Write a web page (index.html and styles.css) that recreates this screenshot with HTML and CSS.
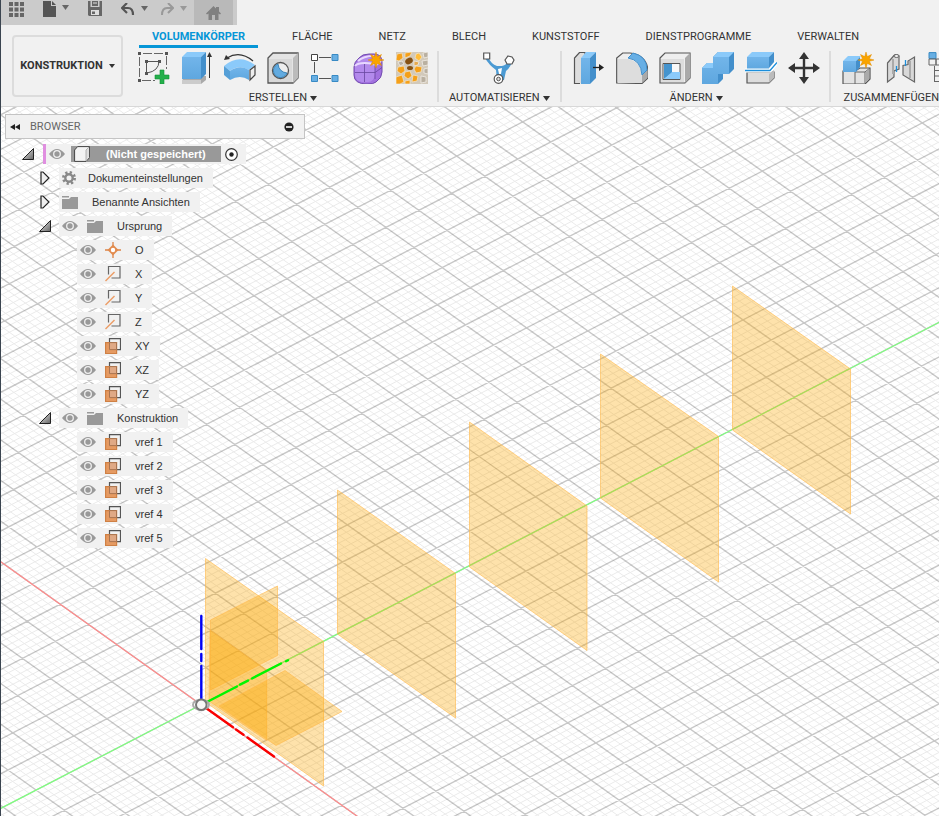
FILE: index.html
```html
<!DOCTYPE html>
<html lang="de">
<head>
<meta charset="utf-8">
<title>Konstruktion</title>
<link rel="stylesheet" href="styles.css">
</head>
<body>
<svg class="defs" aria-hidden="true">
  <defs>
    <linearGradient id="shade" x1="0" y1="0" x2="1" y2="1"><stop offset="0" stop-color="#eee"/><stop offset="1" stop-color="#666"/></linearGradient>
    <linearGradient id="blueFace" x1="0" y1="0" x2="0" y2="1"><stop offset="0" stop-color="#72b5ea"/><stop offset="1" stop-color="#5ea7df"/></linearGradient>
    <symbol id="caret" viewBox="0 0 8 5" preserveAspectRatio="none"><path d="M0 0h8L4 5z" fill="currentColor"/></symbol>
    <symbol id="eye" viewBox="0 0 16 12"><path d="M0 6Q4 1 8 1t8 5q-4 5-8 5T0 6z" fill="#999"/><circle cx="8" cy="6" r="3.3" fill="none" stroke="#f1f1f1" stroke-width="1.3"/></symbol>
    <symbol id="folder" viewBox="0 0 16 14"><path d="M0 1h7v1.500H0zM9 2h7v12H0V4h7z" fill="#999"/></symbol>
    <symbol id="open" viewBox="0 0 12 12"><path d="M.5 11.500h11V.5z" fill="url(#shade)" stroke="#222"/></symbol>
    <symbol id="closed" viewBox="0 0 10 14"><path d="M1 1h2l6 6-6 6H1z" fill="#eee" stroke="#222" stroke-width="1.200"/></symbol>
    <symbol id="axis" viewBox="0 0 16 16"><path d="M3.500 8.500v-8h11.500v11.500H6.500" fill="none" stroke="#666" stroke-width="1.200"/><path d="M.5 15 9.500 6" stroke="#eb9c66" stroke-width="1.400"/></symbol>
    <symbol id="plane" viewBox="0 0 16 16"><path d="M4.500 4V.6h11v11H12" fill="none" stroke="#555" stroke-width="1.200"/><path d="M.6 4.600h11v11H.6z" fill="#e59a62" stroke="#cf8044" stroke-width="1.200"/><path d="M4.500 4.600h7v7h-7z" fill="#e0a985" stroke="#a97450"/></symbol>
    <symbol id="point" viewBox="0 0 16 16"><path d="M8 0v16M0 8h16" stroke="#dc8447" stroke-width="1.300"/><path d="m8 2.500 5.500 5.500-5.500 5.500L2.500 8z" fill="#e28b4e"/><circle cx="8" cy="8" r="2.200" fill="#fff"/></symbol>
    <symbol id="star" viewBox="0 0 16 16"><path d="m8 0 1.300 4.600L13.500 2.500 11.400 6.700 16 8l-4.600 1.300 2.100 4.200-4.200-2.100L8 16l-1.300-4.600-4.200 2.100 2.100-4.200L0 8l4.600-1.300L2.500 2.500l4.200 2.100z" fill="#f9a400" stroke="#e28c00" stroke-width=".5"/></symbol>
  </defs>
</svg>
<div class="app">
  <header>
    <nav class="quick" aria-label="Schnellzugriff">
      <button class="q-grid" aria-label="Datengruppe"><svg width="15" height="15" viewBox="0 0 15 15"><path d="M0 0h4v4H0zM5.500 0h4v4h-4zM11 0h4v4h-4zM0 5.500h4v4H0zM5.500 5.500h4v4h-4zM11 5.500h4v4h-4zM0 11h4v4H0zM5.500 11h4v4h-4zM11 11h4v4h-4z" fill="#666"/></svg></button>
      <button class="q-file" aria-label="Datei"><svg width="13" height="16" viewBox="0 0 13 16"><path d="M0 0h8v5h5v11H0zM9 0l4 4H9z" fill="#555"/></svg><svg class="q-caret" width="7" height="5"><use href="#caret"/></svg></button>
      <button class="q-save" aria-label="Speichern"><svg width="14" height="15" viewBox="0 0 14 15"><path d="M0 0h2.500v6h9V0H14v15H1l-1-1z" fill="#666"/><path d="M4 0h6v5H4z" fill="#666"/><path d="M5 1.500h4v1H5zM3 9h8v5H3z" fill="#ddd"/><path d="M4 10.500h3V13H4z" fill="#666"/></svg></button>
      <button class="q-undo" aria-label="Rückgängig"><svg width="14" height="13" viewBox="0 0 14 13"><path d="M6 0 1 5l5 5M2 5h5q5 0 5 7" fill="none" stroke="#555" stroke-width="2.200"/></svg><svg class="q-caret" width="7" height="5"><use href="#caret"/></svg></button>
      <button class="q-redo" aria-label="Wiederholen"><svg width="14" height="13" viewBox="0 0 14 13"><path d="m8 0 5 5-5 5M12 5H7q-5 0-5 7" fill="none" stroke="#999" stroke-width="2"/></svg><svg class="q-caret" width="7" height="5"><use href="#caret"/></svg></button>
      <button class="q-home" aria-label="Startseite"><svg width="15" height="14" viewBox="0 0 15 14"><path d="M7.500 0 10 2.500V1h3v4.500l2 2-1 1-1.500-1V14H9V9H6v5H2.500V7.500L1 8.500l-1-1z" fill="#808080"/></svg></button>
    </nav>
    <div class="ribbon">
      <button class="workspace">KONSTRUKTION <svg width="6" height="4"><use href="#caret"/></svg></button>
      <div class="ribbon-main">
        <nav class="tabs">
          <a href="#" class="active">VOLUMENKÖRPER</a><a href="#">FLÄCHE</a><a href="#">NETZ</a><a href="#">BLECH</a><a href="#">KUNSTSTOFF</a><a href="#">DIENSTPROGRAMME</a><a href="#">VERWALTEN</a>
        </nav>
        <div class="groups">
          <section class="group">
            <div class="tools">
              <button aria-label="Skizze erstellen"><svg viewBox="0 0 32 32"><path d="M1.500 5v21M5 1.500h21M28.500 4v13M4 28.500h13" fill="none" stroke="#666" stroke-dasharray="9 2"/><path d="M8.500 9v12M8 9.500h12M21 9q0 10-12 12" fill="none" stroke="#555"/><path d="M0 0h3v3H0zM27 0h3v3h-3zM0 27h3v3H0zM7 8h3v3H7zM20 8h3v3h-3zM7 20h3v3H7z" fill="#555"/><path d="M22 18h4v5h5v4h-5v5h-4v-5h-5v-4h5z" fill="#24b04b" stroke="#129137" stroke-width=".6"/></svg></button>
              <button aria-label="Extrusion"><svg viewBox="0 0 32 32"><path d="m1 28 5-4h19v4l-5 4H1z" fill="#aaa"/><path d="M1 28h19v4H1z" fill="#ccc"/><path d="M1 5h19v22H1z" fill="url(#blueFace)"/><path d="m1 5 5-5h19l-5 5z" fill="#8bcafa"/><path d="m20 5 5-5v22l-5 5z" fill="#438fcb"/><path d="M28.500 3v23" stroke="#333"/><path d="m28.500 0 2.500 5h-5z" fill="#333"/></svg></button>
              <button aria-label="Drehung"><svg viewBox="0 0 32 32"><path d="M3 6q13-8 26 3" fill="none" stroke="#333" stroke-width="1.200"/><path d="m0 8 2-5 4 4z" fill="#333"/><path d="M0 14Q15 1 31 13l-6 5Q15 12 6 19z" fill="#8bcafa"/><path d="m0 14 6 5v9l-6-5z" fill="#559fd7"/><path d="M6 19q10-7 19-1v10q-9-6-19 0z" fill="url(#blueFace)"/><path d="m26 18 5-4v9l-5 5z" fill="#eee" stroke="#444" stroke-width="1.200"/></svg></button>
              <button aria-label="Bohrung"><svg viewBox="0 0 32 32"><path d="m1 6 5-5h25v25l-5 5H1z" fill="#e4e4e4" stroke="#555" stroke-width="1.300"/><path d="M26 6 31 1v25l-5 5z" fill="#bbb"/><path d="M2 7h23v23H2z" fill="#d8d8d8"/><circle cx="13.500" cy="18.500" r="8" fill="#eee" stroke="#555" stroke-width="1.300"/><path d="M11 12q1 8 9 9a7 7 0 1 1-9-9z" fill="#62abe0" stroke="#2874aa" stroke-width=".8"/></svg></button>
              <button aria-label="Muster"><svg viewBox="0 0 32 32"><path d="M9 5.500h12M4.500 10v11M9 26.500h12" stroke="#555"/><path d="M1.500 2.500h6v6h-6z" fill="#fff" stroke="#444"/><path d="M22 2.500h6v6h-6zM1.500 23.500h6v6h-6zM22 23.500h6v6h-6z" fill="#68afe3" stroke="#388ac4"/></svg></button>
              <button aria-label="Form erstellen"><svg viewBox="0 0 32 32"><path d="M1 15q0-5 5-9 3-4 10-4h5q8 0 8 8v10q0 6-6 10-2 2-9 2-13 0-13-9z" fill="#a271df" stroke="#714bae"/><path d="M2 15q1-8 9-9h5q5 0 6 7v9q-1 8-7 8H9q-7-1-7-8z" fill="#b38aec"/><path d="M2 14q2-3 10-3t10 2M5 9q5-5 16-5M22 14l6-5" fill="none" stroke="#e8d8ff" stroke-width="2"/><path d="M11.500 12v18M2 20.500h20l7-5M22 11v16" fill="none" stroke="#6848a0" stroke-width=".8"/><use href="#star" x="15" y="0" width="16" height="16"/></svg></button>
              <button aria-label="Volumengitter"><svg viewBox="0 0 32 32"><path d="M0 0h32v32H0z" fill="#d2c9ba"/><g fill="#f5a019" stroke="#f2e6cf" stroke-width=".7"><path d="m1 2 5-1 1 5-4 3-3-1zM9 1l7-1-2 4-5 2zM2 15l6-1 1 5-4 3-4-3zM20 14l6 1-1 5-5 1-2-4zM0 25l6-2 2 7-4 2H0zM9 20l5-1 2 5-4 3-4-3zM17 23l5 1-1 5-5 1zM9 29l5-1v4H9z"/><path d="m20 2 3-1 3 4-3 4-4-3z" fill="#ffbd3b"/></g><g fill="#865113"><ellipse cx="13" cy="9" rx="4" ry="3" transform="rotate(-30 13 9)"/><ellipse cx="14" cy="16" rx="3" ry="2"/></g><g fill="#b9b0a1" stroke="#f1eee7" stroke-width=".8"><path d="m27 1 5-1v5l-4 1zM26 9l6-1v5l-5 1zM28 17l4-1v6l-4-1zM25 24l5 1v5l-5 1zM2 10l4-1 2 3-4 2z"/><path d="m18 9 5 1-1 3-4 1z" fill="#e6aa50"/></g></svg></button>
            </div>
            <button class="label">ERSTELLEN <svg width="7" height="5"><use href="#caret"/></svg></button>
          </section>
          <section class="group auto">
            <div class="tools">
              <button aria-label="Automatisieren"><svg viewBox="0 0 32 32"><path d="M5 5q3 7 9 9h5q5-1 7-6l3 2q-2 6-6 9l-2 9h-7l-1-10Q6 13 2 6z" fill="#4b9ad3"/><path d="m15 17 4-1-1 6h-2z" fill="#fff"/><path d="M.7 1h6v6h-6zM25 4l4 1 2 3-2 4h-5l-2-4z" fill="#fff" stroke="#555" stroke-width="1.200"/><circle cx="15.500" cy="27" r="4.300" fill="#fff" stroke="#555" stroke-width="1.200"/><circle cx="15.500" cy="27" r="1.800" fill="#ddd" stroke="#555"/></svg></button>
            </div>
            <button class="label">AUTOMATISIEREN <svg width="7" height="5"><use href="#caret"/></svg></button>
          </section>
          <section class="group">
            <div class="tools">
              <button aria-label="Drücken/Ziehen"><svg viewBox="0 0 32 32"><path d="M7 31.500H1.500V6l5-5.500H12v31" fill="#ddd" stroke="#555" stroke-width="1.200"/><path d="M8 6h9v26H8z" fill="url(#blueFace)"/><path d="m8 6 5-6h10l-6 6z" fill="#8bcafa"/><path d="m17 6 6-6v26l-6 6z" fill="#438fcb"/><path d="M20 15.500h8" stroke="#222" stroke-width="1.300"/><path d="m26 12 5 3.500-5 3.500z" fill="#222"/></svg></button>
              <button aria-label="Abrundung"><svg viewBox="0 0 32 32"><path d="M.7 31V6l6-5H14q17 2 18 18v7l-6 5.500z" fill="#eee" stroke="#555" stroke-width="1.200"/><path d="M2 7h10q13 2 14 18v6H2z" fill="#ddd"/><path d="m26 23 5-5v8l-5 5z" fill="#aaa"/><path d="m12 6 5-5q14 3 14 17l-5 5Q25 8 12 6z" fill="#67afe5" stroke="#438fcb"/></svg></button>
              <button aria-label="Schale"><svg viewBox="0 0 32 32"><path d="m1 6 5-5h25v25l-5 5H1z" fill="#eee" stroke="#555" stroke-width="1.200"/><path d="m26 6 5-5v25l-5 5z" fill="#aaa"/><path d="M2 7h23v23H2z" fill="#ddd"/><path d="M4 11.500h17v16H4z" fill="#f8f8f8" stroke="#555"/><path d="M5 12h8v9l-8 6z" fill="#4594ce"/><path d="m5 27 8-7h8v7z" fill="#8bcafa"/></svg></button>
              <button aria-label="Kombinieren"><svg viewBox="0 0 32 32"><path d="m0 16 5-5h6V5l5-5h16v17l-5 5h-6v5l-5 5H0z" fill="#438fcb"/><path d="M0 16h11V5h16v17H16v10H0z" fill="url(#blueFace)"/><path d="m0 16 5-5h6v5zM11 5l5-5h16l-5 5z" fill="#8bcafa"/></svg></button>
              <button aria-label="Körper teilen"><svg viewBox="0 0 32 32"><path d="M2 20h27v6l-5 5H2z" fill="#ddd" stroke="#555" stroke-width="1.200"/><path d="m24 22 5-4v8l-5 5z" fill="#bbb"/><path d="M2 5h22v12H2z" fill="url(#blueFace)"/><path d="m2 5 5-5h22l-5 5z" fill="#8bcafa"/><path d="m24 5 5-5v10l-5 6z" fill="#438fcb"/><path d="M0 18.500h25l7-8" fill="none" stroke="#fff" stroke-width="4"/><path d="M0 18.500h25l7-8" fill="none" stroke="#1b8edb" stroke-width="1.300"/></svg></button>
              <button aria-label="Verschieben"><svg viewBox="0 0 32 32"><path d="M16 5v22M5 16h22" stroke="#333" stroke-width="2.400"/><path d="m16 0 5 7H11zM16 32l-5-7h10zM0 16l7-5v10zM32 16l-7 5V11z" fill="#333"/></svg></button>
            </div>
            <button class="label">ÄNDERN <svg width="7" height="5"><use href="#caret"/></svg></button>
          </section>
          <section class="group last">
            <div class="tools">
              <button aria-label="Neue Komponente"><svg viewBox="0 0 32 32"><path d="M1 19h12l5-3h10v11l-5 5H1z" fill="#e3e3e3" stroke="#555" stroke-width="1.200"/><path d="M13 20v12M13 20h10l5-4M23 20v11" fill="none" stroke="#666"/><path d="m23 21 4-4v10l-4 4z" fill="#aaa"/><path d="M1 9h13v11H1z" fill="url(#blueFace)"/><path d="m1 9 5-5h13l-5 5z" fill="#8bcafa"/><path d="m14 9 4-4v10l-4 5z" fill="#438fcb"/><use href="#star" x="16" y="0" width="16" height="16"/></svg></button>
              <button aria-label="Verbindung"><svg viewBox="0 0 32 32"><path d="M2.500 11 9 3.500q2-2 5 .5v13l-5 2v6l-6.500 5z" fill="#d8d8d8" stroke="#666" stroke-width="1.200"/><path d="M29.500 5v25L18 23V13.500l5-1V9z" fill="#d8d8d8" stroke="#666" stroke-width="1.200"/><path d="M8 7v15M25 9v17" stroke="#aaa" stroke-width="2"/><path d="M11.500 14v6M20.500 8v6" stroke="#1b8edb" stroke-width="1.300"/><ellipse cx="11.500" cy="4" rx="2.500" ry="1.500" fill="#eee" stroke="#666"/></svg></button>
              <button aria-label="Stückliste"><svg viewBox="0 0 32 32"><path d="M1 .6h7v6H1z" fill="#68afe3" stroke="#388ac4"/><path d="M1 7h7v6H1zM8 7h7v6H8zM6.500 14v16M6.500 18.500h8M6.500 24h8M6.500 29.500h8" fill="none" stroke="#666"/></svg></button>
            </div>
            <button class="label">ZUSAMMENFÜGEN <svg width="7" height="5"><use href="#caret"/></svg></button>
          </section>
        </div>
      </div>
    </div>
  </header>
  <main>
    <svg class="scene" role="img" aria-label="Ansichtsfenster">
      <g transform="translate(-1 -107)">
        <g transform="matrix(32.97 -17.08 28.15 20.1 201 704.7)">
          <path id="minor"/>
          <path id="major"/>
        </g>
        <path class="axis-line green" d="M0 808.8 201 704.700 1300 135.400"/>
        <path class="axis-line red" d="M0 561.200 201 704.700 600 989.600"/>
        <g class="planes">
          <path d="M732.500 286 850.500 369V514L732.500 430z"/>
          <path d="M600.500 354 718.500 436.500V582L600.500 498z"/>
          <path d="M469.500 422 587 506V650.500L469.500 567z"/>
          <path d="M337.500 490 455.500 573.500V718L337.500 634z"/>
          <path d="M205.500 558.500 323.500 641.500V786L205.500 702z"/>
          <path d="M210.500 620 277.500 586V655.500L210.500 690z"/>
          <path d="M210 630 266.700 670V740.500L209 701z"/>
          <path d="M285 670.500 342 711.500 276 745.500 219 706z"/>
        </g>
        <g class="axes">
          <path stroke="#0000f5" d="M201.300 616v33M201.300 654v7M201.300 666v34"/>
          <path stroke="#00f500" d="m206 702.500 31-16M240 684.600l8-4M252 678.500l29-15M286 661.200l2-1"/>
          <path stroke="#fa0000" d="m206 708 27 19.300M236 729.500l7.500 5.300M247.500 737.600l26.500 19"/>
        </g>
        <ellipse cx="201" cy="704.700" rx="8" ry="5" fill="none" stroke="#aaa" stroke-width="2"/>
        <circle cx="201.300" cy="704.700" r="5.300" fill="#f6f6f6" stroke="#777" stroke-width="2"/>
      </g>
    </svg>
    <aside class="browser">
      <div class="browser-head">
        <button aria-label="Einklappen"><svg width="10" height="6" viewBox="0 0 10 6"><path d="M5 0v6L0 3zM10 0v6L5 3z" fill="#222"/></svg></button>
        <h2>BROWSER</h2>
        <button aria-label="Ausblenden"><svg width="10" height="10" viewBox="0 0 10 10"><circle cx="5" cy="5" r="4.600" fill="#222"/><path d="M2 5h6" stroke="#fff" stroke-width="1.600"/></svg></button>
      </div>
      <ul class="tree">
        <li class="root"><svg class="exp" width="12" height="12"><use href="#open"/></svg><div class="item"><svg class="eye"><use href="#eye"/></svg><span class="selected"><svg width="16" height="16" viewBox="0 0 16 16"><path d="m.6 4 3-3.400h12v11l-3.600 3.800H.6z" fill="#f3f3f3" stroke="#444"/><path d="m12 4 3-3v10l-3 4z" fill="#ddd"/><path d="m12 4 3-3M12 4v11" stroke="#999" stroke-width=".7"/></svg>(Nicht gespeichert)</span><svg class="radio" width="13" height="13" viewBox="0 0 13 13"><circle cx="6.500" cy="6.500" r="5.800" fill="#fff" stroke="#333" stroke-width="1.200"/><circle cx="6.500" cy="6.500" r="2.200" fill="#222"/></svg></div></li>
        <li class="l2"><svg class="exp" width="10" height="14"><use href="#closed"/></svg><div class="item plain"><svg width="14" height="14" viewBox="0 0 14 14"><circle cx="7" cy="7" r="5.500" fill="none" stroke="#888" stroke-width="3" stroke-dasharray="2.160 2.160"/><circle cx="7" cy="7" r="3.700" fill="none" stroke="#888" stroke-width="2.400"/></svg>Dokumenteinstellungen</div></li>
        <li class="l2"><svg class="exp" width="10" height="14"><use href="#closed"/></svg><div class="item plain"><svg class="folder"><use href="#folder"/></svg>Benannte Ansichten</div></li>
        <li class="l2"><svg class="exp" width="12" height="12"><use href="#open"/></svg><div class="item"><svg class="eye"><use href="#eye"/></svg><svg class="folder"><use href="#folder"/></svg>Ursprung</div></li>
        <li class="l3"><div class="item"><svg class="eye"><use href="#eye"/></svg><svg class="kind"><use href="#point"/></svg>O</div></li>
        <li class="l3"><div class="item"><svg class="eye"><use href="#eye"/></svg><svg class="kind"><use href="#axis"/></svg>X</div></li>
        <li class="l3"><div class="item"><svg class="eye"><use href="#eye"/></svg><svg class="kind"><use href="#axis"/></svg>Y</div></li>
        <li class="l3"><div class="item"><svg class="eye"><use href="#eye"/></svg><svg class="kind"><use href="#axis"/></svg>Z</div></li>
        <li class="l3"><div class="item"><svg class="eye"><use href="#eye"/></svg><svg class="kind"><use href="#plane"/></svg>XY</div></li>
        <li class="l3"><div class="item"><svg class="eye"><use href="#eye"/></svg><svg class="kind"><use href="#plane"/></svg>XZ</div></li>
        <li class="l3"><div class="item"><svg class="eye"><use href="#eye"/></svg><svg class="kind"><use href="#plane"/></svg>YZ</div></li>
        <li class="l2"><svg class="exp" width="12" height="12"><use href="#open"/></svg><div class="item"><svg class="eye"><use href="#eye"/></svg><svg class="folder"><use href="#folder"/></svg>Konstruktion</div></li>
        <li class="l3"><div class="item"><svg class="eye"><use href="#eye"/></svg><svg class="kind"><use href="#plane"/></svg>vref 1</div></li>
        <li class="l3"><div class="item"><svg class="eye"><use href="#eye"/></svg><svg class="kind"><use href="#plane"/></svg>vref 2</div></li>
        <li class="l3"><div class="item"><svg class="eye"><use href="#eye"/></svg><svg class="kind"><use href="#plane"/></svg>vref 3</div></li>
        <li class="l3"><div class="item"><svg class="eye"><use href="#eye"/></svg><svg class="kind"><use href="#plane"/></svg>vref 4</div></li>
        <li class="l3"><div class="item"><svg class="eye"><use href="#eye"/></svg><svg class="kind"><use href="#plane"/></svg>vref 5</div></li>
      </ul>
    </aside>
  </main>
</div>
<script src="grid.js"></script>
</body>
</html>
```
FILE: styles.css
```css
* { box-sizing: border-box; }
body { margin: 0; background: #f1f1f1; color: #333; font: 11px/14px Roboto, "Liberation Sans", sans-serif; }
button { margin: 0; padding: 0; border: 0; background: none; color: inherit; font: inherit; }
svg { display: block; flex: none; }
.defs { position: absolute; width: 0; height: 0; }
.app { display: flex; flex-direction: column; height: 100vh; overflow: hidden; border-left: 1px solid #3b4550; }

.quick { display: flex; align-items: flex-start; width: max-content; height: 25px; padding-right: 4px; background: #cbcbcb; color: #666; }
.quick button { display: flex; align-items: flex-start; gap: 6px; padding-top: 2px; }
.q-caret { margin-top: 4px; }
.quick .q-grid { margin-left: 8px; }
.quick .q-file { margin-left: 19px; padding-top: 1px; }
.quick .q-save { margin-left: 19px; padding-top: 1px; }
.quick .q-undo { margin-left: 19px; padding-top: 3px; }
.quick .q-redo { margin-left: 12px; padding-top: 3px; color: #999; }
.q-undo .q-caret, .q-redo .q-caret { margin-top: 3px; }
.quick .q-home { margin-left: 7px; width: 39px; height: 25px; padding-top: 6px; justify-content: center; background: #b9b9b9; }

.ribbon { display: flex; height: 82px; border-bottom: 1px solid #d8d8d8; }
.workspace { display: flex; flex: none; align-items: center; justify-content: center; gap: 6px; width: 111px; height: 62px; margin: 10px 15px 0 11px; border: 2px solid #dcdcdc; border-radius: 4px; font-weight: 700; }
.ribbon-main { flex: 1; min-width: 0; overflow: hidden; }
.tabs { display: flex; gap: 22px; height: 23px; margin-left: 1px; }
.tabs a { flex: none; height: 23px; padding: 5px 12px 0; color: inherit; text-decoration: none; }
.tabs a.active { padding: 5px 13px 0; color: #0696d7; font-weight: 700; border-bottom: 3px solid #0696d7; }
.groups { display: flex; margin-top: 3px; }
.group { display: flex; flex: none; flex-direction: column; align-items: center; height: 51px; padding: 1px 9px 0 11px; border-right: 2px solid #dcdcdc; }
.group:first-child { padding-left: 0; }
.group.last { align-items: flex-start; border: 0; }
.group.auto { padding: 1px 10px 0; }
.tools { display: flex; gap: 11px; }
.tools svg { width: 32px; height: 32px; }
.label { display: flex; align-items: center; gap: 3px; margin-top: 7px; white-space: nowrap; }
.last .label { margin-left: 2px; }

main { position: relative; flex: 1; min-height: 0; overflow: hidden; background: #fff; }
.scene { position: absolute; inset: 0; width: 100%; height: 100%; }
#minor, #major { fill: none; vector-effect: non-scaling-stroke; }
#minor { stroke: #ebebeb; stroke-width: 1px; }
#major { stroke: #000; stroke-opacity: .22; stroke-width: 1.4px; }
.axis-line { fill: none; stroke-width: 1.2; }
.green { stroke: #7dff7d; }
.red { stroke: #ff8a8a; }
.planes { fill: #fca800; fill-opacity: .33; stroke: #ffb848; stroke-opacity: .6; }
.axes { fill: none; stroke-width: 2.4; stroke-linecap: round; }

.browser { position: relative; width: 300px; margin: 7px 0 0 4px; }
.browser-head { display: flex; align-items: center; height: 25px; padding: 0 10px 0 4px; border: 1px solid #c4c4c4; background: #f1f1f1; color: #666; }
.browser-head h2 { flex: 1; margin: 0 0 0 10px; font: inherit; }
.tree { margin: 0; padding: 3px 0 0; list-style: none; font-family: "Liberation Sans", Arial, sans-serif; }
.tree li { display: flex; align-items: center; height: 24px; }
.exp { margin-right: 8px; }
.root { padding-left: 17px; }
.l2 { padding-left: 34px; }
.l2 .exp[width="10"] { margin: 0 9px 0 1px; }
.l3 { padding-left: 72px; }
.item { display: flex; align-items: center; height: 20px; padding: 0 10px 0 3px; background: #f1f1f1; white-space: nowrap; }
.eye { width: 16px; height: 12px; margin-right: 9px; }
.folder { width: 16px; height: 14px; margin-right: 14px; }
.kind { width: 16px; height: 16px; margin-right: 14px; }
.plain svg[width="14"] { margin-right: 12px; }
.root .exp { margin-right: 9px; }
.root .item { padding-right: 8px; border-left: 3px solid #e08fe0; }
.root .eye { margin-right: 6px; }
.selected { display: flex; align-items: center; gap: 16px; height: 16px; padding: 0 15px 0 3px; background: #999; color: #fff; font-weight: 700; }
.radio { margin-left: 4px; }
```
FILE: grid.js
```js
// Ground grid in model units; the parent group's matrix projects it to the screen.
const SPAN = 60;
const STEPS = 5;
let minor = "";
let major = "";
for (let i = -SPAN * STEPS; i <= SPAN * STEPS; i++) {
  const v = i / STEPS;
  const line = `M${v} ${-SPAN}V${SPAN}M${-SPAN} ${v}H${SPAN}`;
  if (i % STEPS) minor += line;
  else major += line;
}
document.getElementById("minor").setAttribute("d", minor);
document.getElementById("major").setAttribute("d", major);
```
